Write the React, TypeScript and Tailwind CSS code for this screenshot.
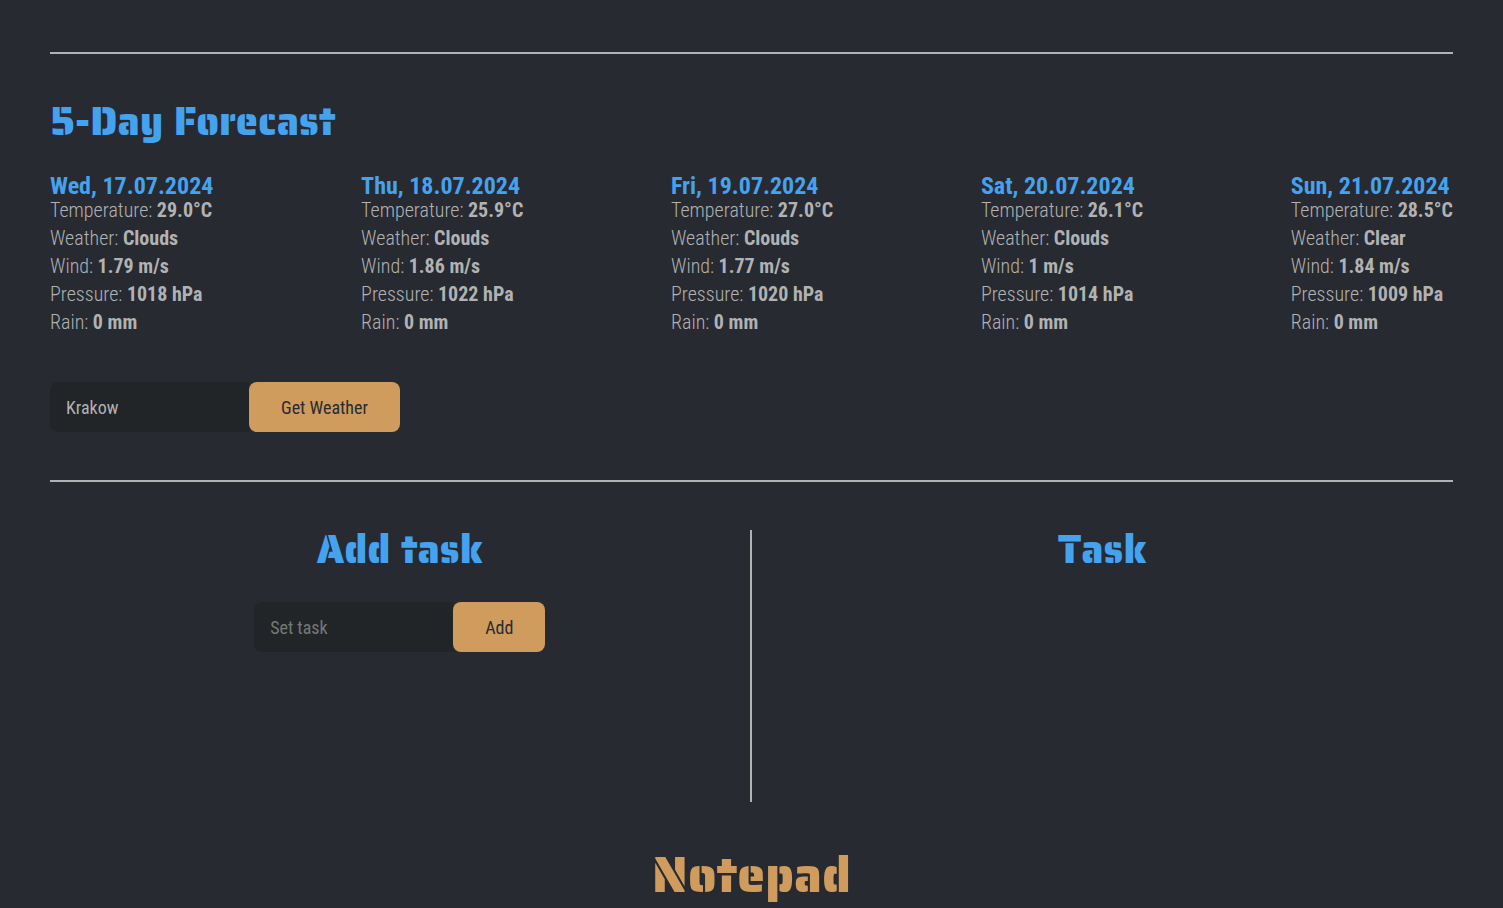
import React, { useState } from "react";

const days = [
  { date: "Wed, 17.07.2024", temp: "29.0°C", weather: "Clouds", wind: "1.79 m/s", pressure: "1018 hPa", rain: "0 mm" },
  { date: "Thu, 18.07.2024", temp: "25.9°C", weather: "Clouds", wind: "1.86 m/s", pressure: "1022 hPa", rain: "0 mm" },
  { date: "Fri, 19.07.2024", temp: "27.0°C", weather: "Clouds", wind: "1.77 m/s", pressure: "1020 hPa", rain: "0 mm" },
  { date: "Sat, 20.07.2024", temp: "26.1°C", weather: "Clouds", wind: "1 m/s", pressure: "1014 hPa", rain: "0 mm" },
  { date: "Sun, 21.07.2024", temp: "28.5°C", weather: "Clear", wind: "1.84 m/s", pressure: "1009 hPa", rain: "0 mm" },
];

const heading = "font-['Saira_Stencil_One','Roboto',sans-serif] font-normal";

function Row({ label, value }: { label: string; value: string }) {
  return (
    <p>
      {label}: <strong className="font-bold">{value}</strong>
    </p>
  );
}

export default function App() {
  const [city, setCity] = useState("Krakow");
  const [task, setTask] = useState("");
  return (
    <main className="min-h-screen bg-[#272a31] px-[50px] pt-[52px] font-['Roboto_Condensed','Roboto',sans-serif] font-stretch-condensed text-[20px] font-light text-[#b0b2b3]">
      <section className="border-t-2 border-[#b0b2b3] pt-12 pb-12">
        <h2 className={`${heading} text-[40px] leading-[40px] text-[#45a2ee]`}>5-Day Forecast</h2>
        <div className="mt-8 flex justify-between">
          {days.map((d) => (
            <article key={d.date}>
              <h3 className="text-[24px] leading-[24px] font-bold text-[#45a2ee]">{d.date}</h3>
              <div className="flex flex-col gap-1 leading-[24px]">
                <Row label="Temperature" value={d.temp} />
                <Row label="Weather" value={d.weather} />
                <Row label="Wind" value={d.wind} />
                <Row label="Pressure" value={d.pressure} />
                <Row label="Rain" value={d.rain} />
              </div>
            </article>
          ))}
        </div>
        <form className="mt-12 flex h-[50px] text-[18px] font-normal" onSubmit={(e) => e.preventDefault()}>
          <input aria-label="City" value={city} onChange={(e) => setCity(e.target.value)} className="w-[199px] rounded-l-lg bg-[#222528] px-4" />
          <button className="rounded-lg bg-[#d09c5e] px-8 text-[#272a31]">Get Weather</button>
        </form>
      </section>
      <section className="grid grid-cols-2 border-t-2 border-[#b0b2b3] pt-12 text-center">
        <div className="h-[272px] border-r-2 border-[#b0b2b3]">
          <h2 className={`${heading} text-[40px] leading-[40px] text-[#45a2ee]`}>Add task</h2>
          <form className="mt-8 flex h-[50px] justify-center text-[18px] font-normal" onSubmit={(e) => e.preventDefault()}>
            <input aria-label="Task" placeholder="Set task" value={task} onChange={(e) => setTask(e.target.value)} className="w-[199px] rounded-l-lg bg-[#222528] px-4 placeholder:text-[#75787a]" />
            <button className="rounded-lg bg-[#d09c5e] px-8 text-[#272a31]">Add</button>
          </form>
        </div>
        <div>
          <h2 className={`${heading} text-[40px] leading-[40px] text-[#45a2ee]`}>Task</h2>
        </div>
      </section>
      <h2 className={`${heading} mt-12 text-center text-[50px] leading-[50px] text-[#d09c5e]`}>Notepad</h2>
    </main>
  );
}
